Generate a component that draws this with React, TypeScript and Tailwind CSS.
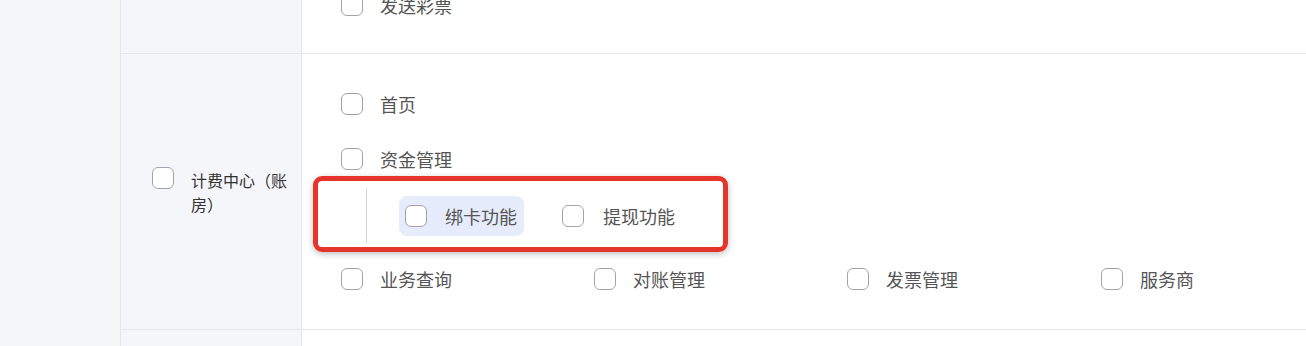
import React from "react";

const font = { fontFamily: '"Noto Sans CJK SC", "Noto Sans", sans-serif' };

function Box() {
  return (
    <span className="block h-[22px] w-[22px] shrink-0 rounded-[6px] border border-[#a3a3b0] bg-white" />
  );
}

function Item({ label, className = "" }: { label: string; className?: string }) {
  return (
    <div className={"flex h-[32px] items-center gap-[17px] " + className}>
      <Box />
      <span className="text-[18px] leading-[24px] text-[#555]">{label}</span>
    </div>
  );
}

export default function App() {
  return (
    <div className="flex h-[346px] w-[1306px] overflow-hidden bg-white" style={font}>
      <div className="w-[121px] shrink-0 border-r border-[#e6e7eb] bg-[#f6f7f9]" />
      <div className="flex flex-1 flex-col">
        {/* top row */}
        <div className="flex h-[54px] shrink-0 border-b border-[#e6e7eb]">
          <div className="w-[181px] shrink-0 border-r border-[#e6e7eb] bg-[#f5f6f9]" />
          <div className="flex flex-1 flex-col justify-end overflow-hidden pb-[32px] pl-[39px]">
            <div className="shrink-0">
              <Item label="发送彩票" />
            </div>
          </div>
        </div>
        {/* middle row */}
        <div className="flex h-[276px] shrink-0 border-b border-[#e6e7eb]">
          <div className="flex w-[181px] shrink-0 items-center border-r border-[#e6e7eb] bg-[#f5f6f9] pl-[31px]">
            <div className="flex items-start gap-[17px]">
              <span className="mt-[-1px]">
                <Box />
              </span>
              <span className="w-[100px] text-[16px] leading-[24px] text-[#333]">
                计费中心（账房）
              </span>
            </div>
          </div>
          <div className="relative flex flex-1 flex-col pl-[39px] pt-[34px]">
            <Item label="首页" />
            <Item label="资金管理" className="mt-[23px]" />
            <div className="mt-[13px] flex h-[55px] items-center">
              <div className="ml-[25px] h-full w-px bg-[#d4d4d8]" />
              <div className="ml-[32px] flex h-[40px] items-center gap-[18px] rounded-[8px] bg-[#e6ecfb] pl-[6px] pr-[7px]">
                <Box />
                <span className="text-[18px] leading-[24px] text-[#555]">绑卡功能</span>
              </div>
              <div className="ml-[38px] flex items-center gap-[19px]">
                <Box />
                <span className="text-[18px] leading-[24px] text-[#555]">提现功能</span>
              </div>
            </div>
            <div className="mt-[20px] grid grid-cols-[253px_253px_254px_200px]">
              <Item label="业务查询" />
              <Item label="对账管理" />
              <Item label="发票管理" />
              <Item label="服务商" />
            </div>
            <div className="pointer-events-none absolute left-[11px] top-[122px] h-[76px] w-[415px] rounded-[9px] border-[5px] border-[#e5352b] shadow-[0_2px_6px_rgba(0,0,0,0.25)]" />
          </div>
        </div>
        {/* bottom row */}
        <div className="flex flex-1">
          <div className="w-[181px] shrink-0 border-r border-[#e6e7eb] bg-[#f5f6f9]" />
          <div className="flex-1" />
        </div>
      </div>
    </div>
  );
}
